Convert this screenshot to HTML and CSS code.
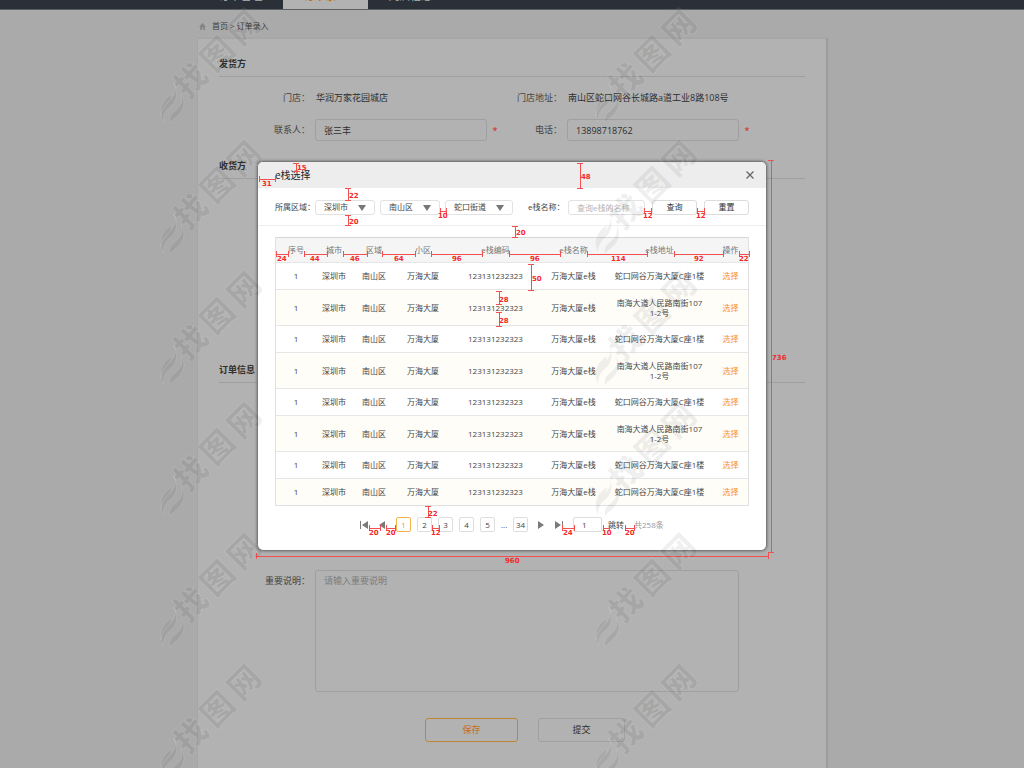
FILE: index.html
```html
<!DOCTYPE html>
<html lang="zh-CN">
<head>
<meta charset="utf-8">
<title>订单录入</title>
<link rel="stylesheet" href="styles.css">
</head>
<body>
<header class="topbar">
  <nav class="nav">
    <a class="nav-item" href="#">订单管理</a>
    <a class="nav-item active" href="#">订单录入</a>
    <a class="nav-item" href="#">门店信息</a>
  </nav>
</header>
<main class="page">
  <div class="crumbs">
    <svg class="home" viewBox="0 0 12 12" aria-hidden="true"><path d="M6 0 0 6.500h2V12h3V8h2v4h3V6.500h2z"/></svg>
    <a href="#">首页</a><span>&gt;</span><span>订单录入</span>
  </div>
  <form class="card">
    <section class="section">
      <h2>发货方</h2>
      <div class="fields">
        <span class="label">门店：</span><span class="value">华润万家花园城店</span>
        <span class="label second">门店地址：</span><span class="value">南山区蛇口网谷长城路a道工业8路108号</span>
      </div>
      <div class="fields">
        <label class="label" for="contact">联系人：</label><input id="contact" class="text" value="张三丰"><i class="star">*</i>
        <label class="label" for="phone">电话：</label><input id="phone" class="text" value="13898718762"><i class="star">*</i>
      </div>
    </section>
    <section class="section receiver">
      <h2>收货方</h2>
    </section>
    <section class="section order">
      <h2>订单信息</h2>
      <div class="fields note">
        <label class="label" for="note">重要说明：</label><textarea id="note" placeholder="请输入重要说明"></textarea>
      </div>
    </section>
    <div class="actions">
      <button type="button" class="save">保存</button>
      <button type="button" class="submit">提交</button>
    </div>
  </form>
</main>

<div class="overlay">
  <div class="modal" role="dialog" aria-labelledby="modal-title">
    <div class="modal-head">
      <h1 id="modal-title">e栈选择</h1>
      <button type="button" class="close" aria-label="关闭"><svg viewBox="0 0 8 8"><path d="M0.5 0.5l7 7M7.5 0.5l-7 7"/></svg></button>
    </div>
    <div class="filters">
      <label class="filter-label" for="city">所属区域：</label>
      <div class="selects">
        <span class="select"><select id="city"><option>深圳市</option></select></span>
        <span class="select"><select aria-label="区"><option>南山区</option></select></span>
        <span class="select wide"><select aria-label="街道"><option>蛇口街道</option></select></span>
      </div>
      <div class="search">
        <label for="name">e栈名称：</label>
        <input id="name" placeholder="查询e栈的名称">
        <button type="button">查询</button>
        <button type="button">重置</button>
      </div>
    </div>
    <div class="modal-body">
      <table class="grid">
        <colgroup><col class="c1"><col class="c2"><col class="c3"><col class="c4"><col class="c5"><col class="c6"><col class="c7"><col class="c8"></colgroup>
        <thead><tr><th>序号</th><th>城市</th><th>区域</th><th>小区</th><th>e栈编码</th><th>e栈名称</th><th>e栈地址</th><th>操作</th></tr></thead>
        <tbody>
          <tr><td>1</td><td>深圳市</td><td>南山区</td><td>万海大厦</td><td>123131232323</td><td>万海大厦e栈</td><td>蛇口网谷万海大厦C座1楼</td><td><a href="#">选择</a></td></tr>
          <tr class="tall"><td>1</td><td>深圳市</td><td>南山区</td><td>万海大厦</td><td>123131232323</td><td>万海大厦e栈</td><td>南海大道人民路南街107<br>1-2号</td><td><a href="#">选择</a></td></tr>
          <tr><td>1</td><td>深圳市</td><td>南山区</td><td>万海大厦</td><td>123131232323</td><td>万海大厦e栈</td><td>蛇口网谷万海大厦C座1楼</td><td><a href="#">选择</a></td></tr>
          <tr class="tall"><td>1</td><td>深圳市</td><td>南山区</td><td>万海大厦</td><td>123131232323</td><td>万海大厦e栈</td><td>南海大道人民路南街107<br>1-2号</td><td><a href="#">选择</a></td></tr>
          <tr><td>1</td><td>深圳市</td><td>南山区</td><td>万海大厦</td><td>123131232323</td><td>万海大厦e栈</td><td>蛇口网谷万海大厦C座1楼</td><td><a href="#">选择</a></td></tr>
          <tr class="tall"><td>1</td><td>深圳市</td><td>南山区</td><td>万海大厦</td><td>123131232323</td><td>万海大厦e栈</td><td>南海大道人民路南街107<br>1-2号</td><td><a href="#">选择</a></td></tr>
          <tr><td>1</td><td>深圳市</td><td>南山区</td><td>万海大厦</td><td>123131232323</td><td>万海大厦e栈</td><td>蛇口网谷万海大厦C座1楼</td><td><a href="#">选择</a></td></tr>
          <tr><td>1</td><td>深圳市</td><td>南山区</td><td>万海大厦</td><td>123131232323</td><td>万海大厦e栈</td><td>蛇口网谷万海大厦C座1楼</td><td><a href="#">选择</a></td></tr>
        </tbody>
      </table>
      <div class="pager">
        <div class="jump">
          <button type="button" aria-label="首页"><svg viewBox="0 0 8 8"><path d="M0 0h1v8H0zM8 0v8L2 4z"/></svg></button>
          <button type="button" aria-label="上一页"><svg viewBox="0 0 8 8"><path d="M7 0v8L1 4z"/></svg></button>
        </div>
        <div class="pages">
          <button type="button" class="current">1</button><button type="button">2</button><button type="button">3</button><button type="button">4</button><button type="button">5</button><span>...</span><button type="button">34</button>
        </div>
        <div class="jump">
          <button type="button" aria-label="下一页"><svg viewBox="0 0 8 8"><path d="M1 0v8l6-4z"/></svg></button>
          <button type="button" aria-label="末页"><svg viewBox="0 0 8 8"><path d="M7 0h1v8H7zM0 0v8l6-4z"/></svg></button>
        </div>
        <div class="goto">
          <input aria-label="页码" value="1"><button type="button">跳转</button>
        </div>
        <span class="total">共258条</span>
      </div>
    </div>

    <svg class="measures" aria-hidden="true">
      <g transform="translate(-258 -162)">
        <g class="lines">
          <path d="M293 163h6m-3 0V171m-3 0h6"/>
          <path d="M259 176v6m0-3H275m0-3v6"/>
          <path d="M345 188h6m-3 0V200m-3 0h6"/>
          <path d="M345 215h6m-3 0V225m-3 0h6"/>
          <path d="M440 208v6m0-3H446m0-3v6"/>
          <path d="M577 163h6m-3 0V188m-3 0h6"/>
          <path d="M644 208v6m0-3H651m0-3v6"/>
          <path d="M697 208v6m0-3H704m0-3v6"/>
          <path d="M512 226h6m-3 0V237m-3 0h6"/>
          <path d="M276 251v6m0-3H288m0-3v6M304 251v6m0-3H327m0-3v6M343 251v6m0-3H367m0-3v6M382 251v6m0-3H415m0-3v6M431 251v6m0-3H482m0-3v6M509 251v6m0-3H560m0-3v6M587 251v6m0-3H647m0-3v6M674 251v6m0-3H723m0-3v6M739 251v6m0-3H749m0-3v6"/>
          <path d="M528 264h6m-3 0V290m-3 0h6"/>
          <path d="M496 291h6m-3 0V304m-3 0h6M496 312h6m-3 0V326m-3 0h6"/>
          <path d="M768 160h6m-3 0V552m-3 0h6"/>
          <path d="M256 553v6m0-3H768m0-3v6"/>
          <path d="M425 506h6m-3 0V517m-3 0h6"/>
          <path d="M369 525v6m0-3H380m0-3v6M386 525v6m0-3H395m0-3v6M432 525v6m0-3H439m0-3v6M562 525v6m0-3H574m0-3v6M603 525v6m0-3H609m0-3v6M625 525v6m0-3H634m0-3v6"/>
        </g>
        <text x="297" y="170">15</text><text x="262" y="186">31</text>
        <text x="349" y="198">22</text><text x="349" y="224">20</text>
        <text x="438" y="218">10</text><text x="581" y="179">48</text>
        <text x="643" y="218">12</text><text x="696" y="218">12</text>
        <text x="516" y="235">20</text>
        <text x="277" y="261">24</text><text x="310" y="261">44</text><text x="350" y="261">46</text><text x="394" y="261">64</text><text x="452" y="261">96</text><text x="530" y="261">96</text><text x="611" y="261">114</text><text x="694" y="261">92</text><text x="739" y="261">22</text>
        <text x="532" y="281">50</text><text x="499" y="302">28</text><text x="499" y="323">28</text>
        <text x="772" y="360">736</text><text x="505" y="563">960</text>
        <text x="428" y="516">22</text>
        <text x="369" y="535">20</text><text x="386" y="535">20</text><text x="431" y="535">12</text><text x="563" y="535">24</text><text x="602" y="535">10</text><text x="625" y="535">20</text>
      </g>
    </svg>
  </div>
</div>

<svg class="watermarks" aria-hidden="true">
  <defs>
    <g id="mark">
      <text transform="translate(57 45) rotate(-45)" x="-53 -16 22" y="12">找图网</text>
      <path d="M14 74c4 9-1 14-6 19-6 6-9 12-5 20 0-9 4-13 9-17 5-5 6-13 2-22zM21 85c3 10-2 13-6 17-4 3-6 6-5 12 3-4 7-6 10-10 5-6 5-13 1-19zM12 85C6 89-1 96 1 107c1-8 5-11 9-16 1-2 2-4 2-6z"/>
    </g>
  </defs>
  <use href="#mark" x="160" y="9"/><use href="#mark" x="160" y="140"/><use href="#mark" x="160" y="271"/><use href="#mark" x="160" y="402"/><use href="#mark" x="160" y="533"/><use href="#mark" x="160" y="664"/>
  <use href="#mark" x="595" y="9"/><use href="#mark" x="595" y="140"/><use href="#mark" x="595" y="271"/><use href="#mark" x="595" y="402"/><use href="#mark" x="595" y="533"/><use href="#mark" x="595" y="664"/>
</svg>
</body>
</html>
```

FILE: styles.css
```css
* { box-sizing: border-box; }
body {
  margin: 0;
  min-height: 100vh;
  display: flex;
  flex-direction: column;
  background: #aaaaaa;
  color: #2e2e2e;
  font: 9px/12px "Open Sans", "Noto Sans CJK SC", sans-serif;
}
h1, h2 { margin: 0; }
a { color: inherit; text-decoration: none; }
input, textarea, select, button { font: inherit; color: inherit; margin: 0; padding: 0; background: none; border: 0; outline: 0; }
button { cursor: pointer; }

.topbar {
  height: 10px;
  overflow: hidden;
  display: flex;
  justify-content: center;
  align-items: flex-end;
  background: #2b3038;
  border-bottom: 1px solid #5c6065;
}
.nav { display: flex; width: 100%; max-width: 628px; }
.nav-item { width: 85px; height: 22px; line-height: 18px; text-align: center; font-size: 11px; color: #b0b0b0; }
.nav-item.active { background: #b2b2b2; color: #c26f0c; font-weight: bold; }

.page { flex: 1; display: flex; flex-direction: column; width: 100%; max-width: 630px; margin: 0 auto; }
.crumbs { display: flex; align-items: center; gap: 2px; height: 28px; padding: 4px 2px 0; font-size: 8px; color: #3c3c3c; }
.home { width: 7px; height: 7px; margin-right: 4px; fill: #858585; }
.card {
  flex: 1;
  padding: 14px 21px 24px;
  background: #b2b2b2;
  border: 1px solid #a6a6a6;
  border-right-color: #999999;
  border-bottom: 0;
  box-shadow: 1px 0 1px #9f9f9f;
}
.section h2 { height: 24px; line-height: 22px; font-size: 9px; border-bottom: 1px solid #9f9f9f; margin-bottom: 10px; }
.section { padding-bottom: 14px; }
.fields {
  display: grid;
  grid-template-columns: 91px 172px 6px 59px 172px 6px;
  column-gap: 5px;
  align-items: center;
  min-height: 22px;
}
.fields + .fields { margin-top: 10px; }
.label { text-align: right; color: #444444; white-space: nowrap; }
.label.second { grid-column: 4; }
.value { padding-left: 1px; white-space: nowrap; }
.text { width: 100%; height: 22px; padding: 0 8px; border: 1px solid #9f9f9f; border-radius: 3px; }
.star { color: #d02020; font-style: normal; text-align: center; line-height: 6px; padding-top: 2px; }
.receiver { min-height: 204px; }
.order { padding-bottom: 26px; }
.order h2 { margin-bottom: 187px; }
.note { align-items: start; }
.note .label { padding-top: 5px; }
.note textarea { grid-column: 2 / 6; height: 122px; padding: 4px 8px; border: 1px solid #9f9f9f; border-radius: 3px; resize: none; display: block; }
.note textarea::placeholder { color: #7c7c7c; }
.actions { display: flex; gap: 20px; padding-left: 206px; }
.save { width: 93px; height: 24px; border: 1px solid #c08534; border-radius: 3px; color: #c26f0c; }
.submit { width: 87px; height: 24px; border: 1px solid #a0a0a0; border-radius: 3px; }

.overlay { position: absolute; inset: 0; display: flex; justify-content: center; align-items: flex-start; padding-top: 162px; }
.modal {
  position: relative;
  width: 100%;
  max-width: 508px;
  background: #ffffff;
  border-radius: 5px;
  box-shadow: 0 0 3px 1px #5e5e5e;
  color: #444444;
  font-size: 8px;
  line-height: 10px;
}
.modal-head { display: flex; justify-content: space-between; align-items: center; height: 26px; padding: 0 12px 0 17px; background: #ededed; border-radius: 5px 5px 0 0; }
.modal-head h1 { font-size: 10px; font-weight: normal; line-height: 14px; color: #222222; }
.close { width: 8px; height: 8px; display: flex; }
.close svg { width: 8px; height: 8px; stroke: #666666; stroke-width: 1.3; fill: none; }
.filters { display: flex; align-items: center; height: 38px; padding: 1px 17px 0; border-bottom: 1px solid #eeeeee; }
.filter-label { width: 40px; white-space: nowrap; }
.selects { display: flex; gap: 5px; }
.select { position: relative; width: 60px; height: 15px; }
.select.wide { width: 68px; }
.select::after { content: ""; position: absolute; right: 9px; top: 5px; border: solid transparent; border-width: 6px 4px 0; border-top-color: #777777; pointer-events: none; }
.select select { appearance: none; width: 100%; height: 15px; padding: 0 8px; border: 1px solid #e2e2e2; border-radius: 3px; }
.search { display: flex; align-items: center; gap: 7px; margin-left: auto; }
.search label { width: 33px; white-space: nowrap; }
.search input { width: 77px; height: 15px; padding: 0 8px; border: 1px solid #e2e2e2; border-radius: 3px; }
.search input::placeholder { color: #b5b5b5; }
.search button { width: 45px; height: 15px; border: 1px solid #dcdcdc; border-radius: 3px; color: #333333; }

.modal-body { padding: 11px 17px 18px; }
.grid { width: 100%; table-layout: fixed; border-collapse: separate; border-spacing: 0; border: 1px solid #e0e0e0; border-top-color: #d6d6d6; text-align: center; }
.c1 { width: 40px; } .c2 { width: 36px; } .c3 { width: 44px; } .c4 { width: 54px; }
.c5 { width: 91px; } .c6 { width: 65px; } .c7 { width: 107px; } .c8 { width: 35px; }
.grid th, .grid td { padding: 0; white-space: nowrap; border-bottom: 1px solid #e6e6e6; }
.grid th { height: 25px; font-weight: normal; background: #f5f5f5; color: #777777; }
.grid td { height: 27px; }
.grid .tall td { height: 36px; }
.grid tbody tr:nth-child(even) { background: #fffdf8; }
.grid tbody tr:last-child td { height: 26px; border-bottom: 0; }
.grid a { color: #f7931e; }

.pager { display: flex; align-items: center; padding: 11px 0 0 85px; }
.jump { display: flex; gap: 10px; margin-right: 10px; }
.jump button, .jump svg { display: block; width: 8px; height: 8px; fill: #7a7a7a; }
.pages { display: flex; align-items: center; gap: 6px; margin-right: 9px; }
.pages button { width: 15px; height: 15px; border: 1px solid #dddddd; border-radius: 2px; }
.pages span { width: 6px; }
.pages .current { border-color: #f7b24a; color: #f7931e; }
.goto { display: flex; align-items: center; gap: 6px; margin-right: 10px; }
.goto input { width: 29px; height: 15px; padding: 0 8px; border: 1px solid #dddddd; border-radius: 2px; }
.total { color: #999999; }

.measures { position: absolute; top: 0; left: 0; width: 100%; height: 100%; overflow: visible; pointer-events: none; }
.measures text { fill: #f52a2a; font: bold 7px "DejaVu Sans", sans-serif; }
.lines { fill: none; stroke: #f25050; stroke-width: 1; shape-rendering: crispEdges; }
.watermarks { position: absolute; top: 0; left: 0; width: 100%; height: 100%; overflow: hidden; pointer-events: none; }
.watermarks text { font: 900 32px "Noto Sans CJK SC", sans-serif; }
.watermarks use { fill: rgba(0, 0, 0, 0.06); stroke: rgba(255, 255, 255, 0.1); stroke-width: 1; paint-order: stroke; }
```
